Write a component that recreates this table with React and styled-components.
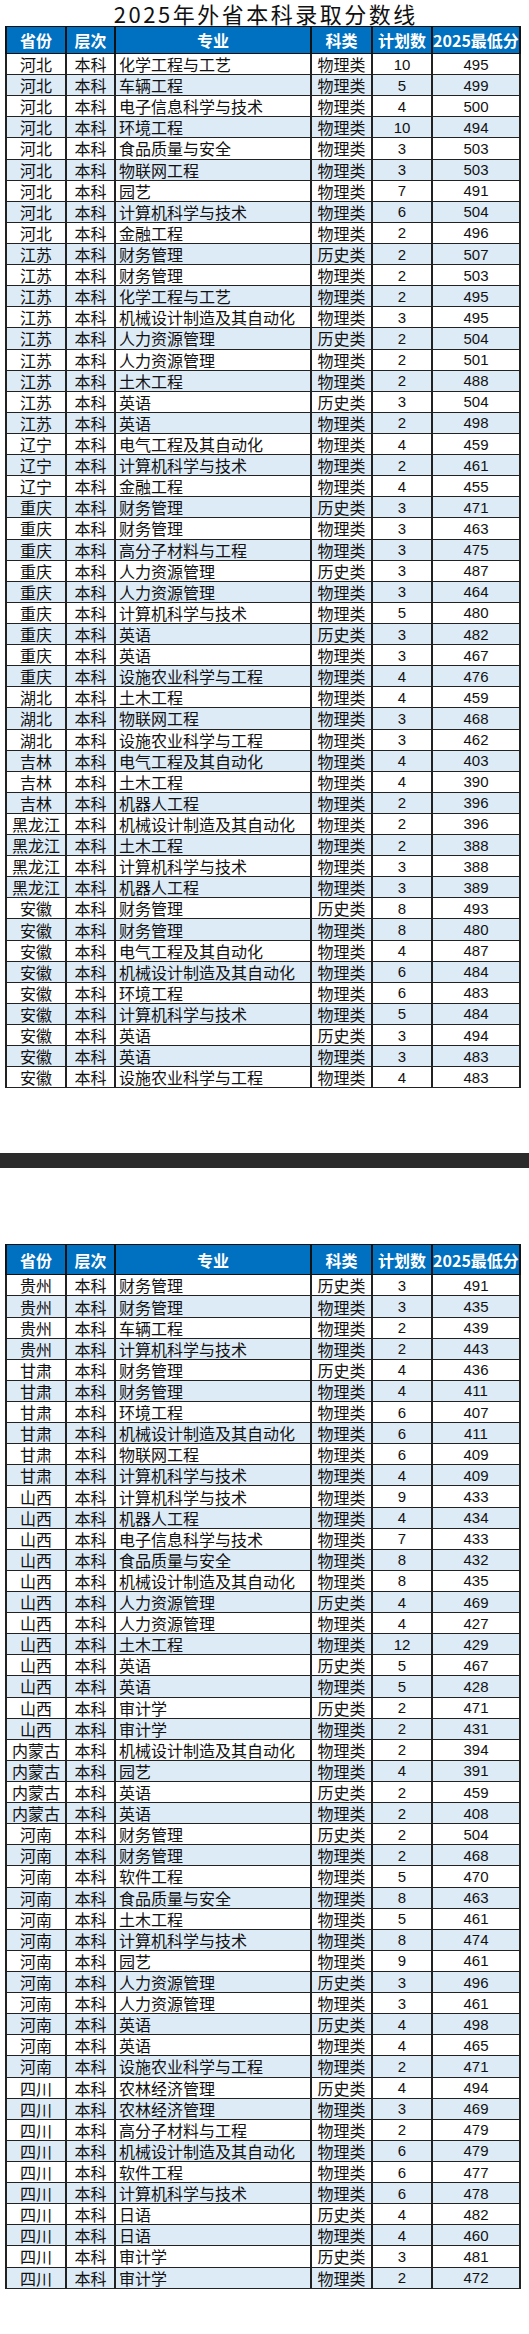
import React from 'react';
import styled, { createGlobalStyle } from 'styled-components';

const GlobalStyle = createGlobalStyle`
    html, body {
        margin: 0;
        padding: 0;
        background: #ffffff;
    }
    body {
        font-family: "Noto Sans CJK SC", "Liberation Sans", sans-serif;
        color: #000;
    }
`;

const Page = styled.div`
    width: 529px;
    height: 2334px;
    background: #ffffff;
    display: flex;
    flex-direction: column;
`;

const Title = styled.div`
    height: 26px;
    line-height: 26px;
    text-align: center;
    font-size: 22px;
    letter-spacing: 2.5px;
    padding-left: 2.5px;
    color: #111;
`;

const Band = styled.div`
    height: 15px;
    background: #2b2b2b;
    margin-top: ${props => props.top}px;
    margin-bottom: ${props => props.bottom}px;
`;

const Table = styled.table`
    margin-left: 5px;
    width: 514px;
    border-collapse: collapse;
    table-layout: fixed;
`;

const HeadRow = styled.tr`
    height: ${props => props.height}px;
    background: #0070c0;
`;

const HeadCell = styled.th`
    padding: 0;
    color: #fff;
    font-size: 16px;
    font-weight: 700;
    line-height: 1;
    text-align: center;
    white-space: nowrap;
    border: 1px solid #111;
    border-left-width: 2px;
    border-right-width: 2px;
`;

const Row = styled.tr`
    height: 21.12px;
    background: #ffffff;
    &:nth-child(even) {
        background: #ddebf7;
    }
`;

const Cell = styled.td`
    padding: 0;
    padding-left: ${props => props.$align === 'left' ? '3px' : '0'};
    text-align: ${props => props.$align || 'center'};
    font-family: ${props => props.$num ? '"Liberation Sans", "Noto Sans CJK SC", sans-serif' : '"Noto Sans CJK SC", "Liberation Sans", sans-serif'};
    font-size: ${props => props.$num ? '15px' : '16px'};
    line-height: 1;
    white-space: nowrap;
    overflow: hidden;
    color: #111;
    border: 1px solid #222;
    border-left-width: 2px;
    border-right-width: 2px;
`;

const widths = [60, 49, 196, 61, 60, 88];
const headers = ['省份', '层次', '专业', '科类', '计划数', '2025最低分'];

const first = `河北 化学工程与工艺 物理类 10 495
河北 车辆工程 物理类 5 499
河北 电子信息科学与技术 物理类 4 500
河北 环境工程 物理类 10 494
河北 食品质量与安全 物理类 3 503
河北 物联网工程 物理类 3 503
河北 园艺 物理类 7 491
河北 计算机科学与技术 物理类 6 504
河北 金融工程 物理类 2 496
江苏 财务管理 历史类 2 507
江苏 财务管理 物理类 2 503
江苏 化学工程与工艺 物理类 2 495
江苏 机械设计制造及其自动化 物理类 3 495
江苏 人力资源管理 历史类 2 504
江苏 人力资源管理 物理类 2 501
江苏 土木工程 物理类 2 488
江苏 英语 历史类 3 504
江苏 英语 物理类 2 498
辽宁 电气工程及其自动化 物理类 4 459
辽宁 计算机科学与技术 物理类 2 461
辽宁 金融工程 物理类 4 455
重庆 财务管理 历史类 3 471
重庆 财务管理 物理类 3 463
重庆 高分子材料与工程 物理类 3 475
重庆 人力资源管理 历史类 3 487
重庆 人力资源管理 物理类 3 464
重庆 计算机科学与技术 物理类 5 480
重庆 英语 历史类 3 482
重庆 英语 物理类 3 467
重庆 设施农业科学与工程 物理类 4 476
湖北 土木工程 物理类 4 459
湖北 物联网工程 物理类 3 468
湖北 设施农业科学与工程 物理类 3 462
吉林 电气工程及其自动化 物理类 4 403
吉林 土木工程 物理类 4 390
吉林 机器人工程 物理类 2 396
黑龙江 机械设计制造及其自动化 物理类 2 396
黑龙江 土木工程 物理类 2 388
黑龙江 计算机科学与技术 物理类 3 388
黑龙江 机器人工程 物理类 3 389
安徽 财务管理 历史类 8 493
安徽 财务管理 物理类 8 480
安徽 电气工程及其自动化 物理类 4 487
安徽 机械设计制造及其自动化 物理类 6 484
安徽 环境工程 物理类 6 483
安徽 计算机科学与技术 物理类 5 484
安徽 英语 历史类 3 494
安徽 英语 物理类 3 483
安徽 设施农业科学与工程 物理类 4 483`;

const second = `贵州 财务管理 历史类 3 491
贵州 财务管理 物理类 3 435
贵州 车辆工程 物理类 2 439
贵州 计算机科学与技术 物理类 2 443
甘肃 财务管理 历史类 4 436
甘肃 财务管理 物理类 4 411
甘肃 环境工程 物理类 6 407
甘肃 机械设计制造及其自动化 物理类 6 411
甘肃 物联网工程 物理类 6 409
甘肃 计算机科学与技术 物理类 4 409
山西 计算机科学与技术 物理类 9 433
山西 机器人工程 物理类 4 434
山西 电子信息科学与技术 物理类 7 433
山西 食品质量与安全 物理类 8 432
山西 机械设计制造及其自动化 物理类 8 435
山西 人力资源管理 历史类 4 469
山西 人力资源管理 物理类 4 427
山西 土木工程 物理类 12 429
山西 英语 历史类 5 467
山西 英语 物理类 5 428
山西 审计学 历史类 2 471
山西 审计学 物理类 2 431
内蒙古 机械设计制造及其自动化 物理类 2 394
内蒙古 园艺 物理类 4 391
内蒙古 英语 历史类 2 459
内蒙古 英语 物理类 2 408
河南 财务管理 历史类 2 504
河南 财务管理 物理类 2 468
河南 软件工程 物理类 5 470
河南 食品质量与安全 物理类 8 463
河南 土木工程 物理类 5 461
河南 计算机科学与技术 物理类 8 474
河南 园艺 物理类 9 461
河南 人力资源管理 历史类 3 496
河南 人力资源管理 物理类 3 461
河南 英语 历史类 4 498
河南 英语 物理类 4 465
河南 设施农业科学与工程 物理类 2 471
四川 农林经济管理 历史类 4 494
四川 农林经济管理 物理类 3 469
四川 高分子材料与工程 物理类 2 479
四川 机械设计制造及其自动化 物理类 6 479
四川 软件工程 物理类 6 477
四川 计算机科学与技术 物理类 6 478
四川 日语 历史类 4 482
四川 日语 物理类 4 460
四川 审计学 历史类 3 481
四川 审计学 物理类 2 472`;

const parse = (text) => text.split('\n').map(line => line.trim().split(' '));

const ScoreTable = ({ rows, headHeight }) => (
    <Table>
        <colgroup>
            {widths.map((w, i) => <col key={i} style={{ width: w }} />)}
        </colgroup>
        <thead>
            <HeadRow height={headHeight}>
                {headers.map(h => <HeadCell key={h}>{h}</HeadCell>)}
            </HeadRow>
        </thead>
        <tbody>
            {rows.map(([province, major, subject, plan, score], i) => (
                <Row key={i}>
                    <Cell>{province}</Cell>
                    <Cell>本科</Cell>
                    <Cell $align="left">{major}</Cell>
                    <Cell>{subject}</Cell>
                    <Cell $num>{plan}</Cell>
                    <Cell $num>{score}</Cell>
                </Row>
            ))}
        </tbody>
    </Table>
);

export default function App() {
    return (
        <Page>
            <GlobalStyle />
            <Title>2025年外省本科录取分数线</Title>
            <ScoreTable rows={parse(first)} headHeight={27} />
            <Band top={65} bottom={76} />
            <ScoreTable rows={parse(second)} headHeight={30} />
        </Page>
    );
}
